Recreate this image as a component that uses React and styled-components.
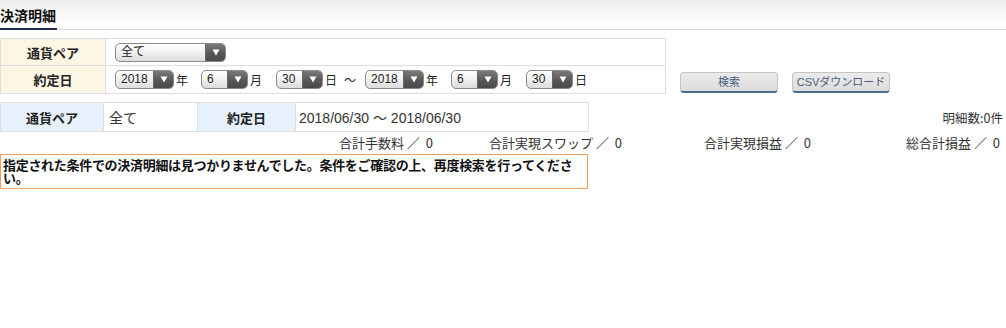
import React from "react";
import styled, { createGlobalStyle } from "styled-components";

const Global = createGlobalStyle`
  html, body { margin: 0; padding: 0; background: #fff; }
  body {
    font-family: "Liberation Sans", "Noto Sans CJK JP", sans-serif;
    color: #222;
    width: 1006px;
  }
`;

const Page = styled.div`
  width: 1006px;
`;

const Header = styled.div`
  height: 29px;
  background: linear-gradient(#eeeeee, #fbfbfb 70%, #fff);
  border-bottom: 1px solid #dcdcdc;
  display: flex;
  align-items: flex-end;
`;

const Title = styled.h1`
  margin: 0;
  font-family: "Noto Sans CJK JP", sans-serif;
  font-size: 14px;
  font-weight: 700;
  line-height: 16px;
  padding: 0 1px 5px 0;
  color: #111;
  border-bottom: 2px solid #1d2a4a;
  margin-bottom: -1px;
`;

const SearchRow = styled.div`
  display: flex;
  align-items: flex-end;
  gap: 14px;
  margin-top: 8px;
`;

const Table = styled.table`
  border-collapse: collapse;
  width: ${(p) => p.$w}px;
  table-layout: fixed;
`;

const Td = styled.td`
  border: 1px solid #dedede;
  height: ${(p) => p.$h || 26}px;
  padding: 0 ${(p) => (p.$label ? 0 : 9)}px;
  background: ${(p) =>
    p.$label === "cream" ? "#fdf6e4" : p.$label === "blue" ? "#e7f1fb" : "#fff"};
  font-family: "Noto Sans CJK JP", sans-serif;
  font-size: ${(p) => (p.$label ? 13 : 14)}px;
  font-weight: ${(p) => (p.$label ? 700 : 400)};
  text-align: ${(p) => (p.$label ? "center" : "left")};
  color: #222;
  white-space: nowrap;
`;

const ValueText = styled.span`
  font-family: "Liberation Sans", "Noto Sans CJK JP", sans-serif;
  font-size: 14px;
  color: #333;
`;

const Controls = styled.div`
  display: flex;
  align-items: center;
`;

const SelectBox = styled.div`
  width: ${(p) => p.$w}px;
  height: 19px;
  box-sizing: border-box;
  border: 1px solid #8a8a8a;
  border-radius: 5px;
  display: flex;
  overflow: hidden;
  background: linear-gradient(#ffffff, #f0f0f0 50%, #dcdcdc);
  margin-left: ${(p) => p.$ml || 0}px;
`;

const SelectText = styled.span`
  flex: 1;
  font-family: "Liberation Sans", "Noto Sans CJK JP", sans-serif;
  font-size: 12px;
  line-height: 17px;
  padding-left: 5px;
  color: #222;
`;

const SelectArrow = styled.span`
  width: 19px;
  background: linear-gradient(#7a7a7a, #555 60%, #4a4a4a);
  border-left: 1px solid #666;
  display: flex;
  align-items: center;
  justify-content: center;
`;

const Unit = styled.span`
  font-family: "Noto Sans CJK JP", sans-serif;
  font-size: 12px;
  color: #222;
  margin-left: 2px;
`;

const Tilde = styled.span`
  font-family: "Noto Sans CJK JP", sans-serif;
  font-size: 12px;
  color: #222;
  margin: 0 9px 0 7px;
`;

const Buttons = styled.div`
  display: flex;
  gap: 14px;
  padding-bottom: 1px;
`;

const Button = styled.button`
  width: 98px;
  height: 21px;
  padding: 0;
  border: 1px solid #c4c4c4;
  border-bottom: 2px solid #4d6a93;
  border-radius: 4px;
  background: linear-gradient(#ebebeb, #dcdcdc);
  font-family: "Liberation Sans", "Noto Sans CJK JP", sans-serif;
  font-size: 11px;
  color: #4b5d7c;
  line-height: 17px;
`;

const ResultRow = styled.div`
  display: flex;
  align-items: center;
  justify-content: space-between;
  margin-top: 8px;
`;

const Count = styled.span`
  font-family: "Noto Sans CJK JP", sans-serif;
  font-size: 12.5px;
  color: #333;
  padding-right: 3px;
`;

const Summary = styled.div`
  display: grid;
  grid-template-columns: repeat(4, 189px);
  justify-content: end;
  padding-right: 6px;
  height: 20px;
  align-items: center;
`;

const SummaryItem = styled.span`
  text-align: right;
  font-family: "Noto Sans CJK JP", sans-serif;
  font-size: 13px;
  color: #333;
  white-space: pre;
`;

const ErrorBox = styled.div`
  width: 588px;
  box-sizing: border-box;
  margin-top: 2px;
  border: 1.5px solid #efa061;
  padding: 3px 1px 4px 2px;
  font-family: "Noto Sans CJK JP", sans-serif;
  font-size: 13px;
  letter-spacing: -0.3px;
  font-weight: 700;
  line-height: 13px;
  color: #111;
`;

const Arrow = () => (
  <svg width="8" height="7" viewBox="0 0 8 7">
    <path d="M0.5 0.5 L7.5 0.5 L4 6.5 Z" fill="#fff" />
  </svg>
);

const Select = ({ w, ml, children }) => (
  <SelectBox $w={w} $ml={ml}>
    <SelectText>{children}</SelectText>
    <SelectArrow>
      <Arrow />
    </SelectArrow>
  </SelectBox>
);

const DateGroup = () => (
  <>
    <Select w={59}>2018</Select>
    <Unit>年</Unit>
    <Select w={47} ml={13}>6</Select>
    <Unit>月</Unit>
    <Select w={47} ml={14}>30</Select>
    <Unit>日</Unit>
  </>
);

export default function App() {
  return (
    <Page>
      <Global />
      <Header>
        <Title>決済明細</Title>
      </Header>

      <SearchRow>
        <Table $w={666}>
          <colgroup>
            <col style={{ width: 105 }} />
            <col />
          </colgroup>
          <tbody>
            <tr>
              <Td $label="cream">通貨ペア</Td>
              <Td>
                <Controls>
                  <Select w={111}>全て</Select>
                </Controls>
              </Td>
            </tr>
            <tr>
              <Td $label="cream" $h={27}>約定日</Td>
              <Td $h={27}>
                <Controls>
                  <DateGroup />
                  <Tilde>〜</Tilde>
                  <DateGroup />
                </Controls>
              </Td>
            </tr>
          </tbody>
        </Table>
        <Buttons>
          <Button>検索</Button>
          <Button>CSVダウンロード</Button>
        </Buttons>
      </SearchRow>

      <ResultRow>
        <Table $w={589}>
          <colgroup>
            <col style={{ width: 103 }} />
            <col style={{ width: 94 }} />
            <col style={{ width: 98 }} />
            <col />
          </colgroup>
          <tbody>
            <tr>
              <Td $label="blue" $h={28}>通貨ペア</Td>
              <Td $h={28} style={{ paddingLeft: 5 }}>
                <ValueText>全て</ValueText>
              </Td>
              <Td $label="blue" $h={28}>約定日</Td>
              <Td $h={28} style={{ paddingLeft: 3 }}>
                <ValueText>2018/06/30 〜 2018/06/30</ValueText>
              </Td>
            </tr>
          </tbody>
        </Table>
        <Count>明細数:0件</Count>
      </ResultRow>

      <Summary>
        <SummaryItem>合計手数料 ／  0</SummaryItem>
        <SummaryItem>合計実現スワップ ／  0</SummaryItem>
        <SummaryItem>合計実現損益 ／  0</SummaryItem>
        <SummaryItem>総合計損益 ／  0</SummaryItem>
      </Summary>

      <ErrorBox>
        指定された条件での決済明細は見つかりませんでした。条件をご確認の上、再度検索を行ってください。
      </ErrorBox>
    </Page>
  );
}
